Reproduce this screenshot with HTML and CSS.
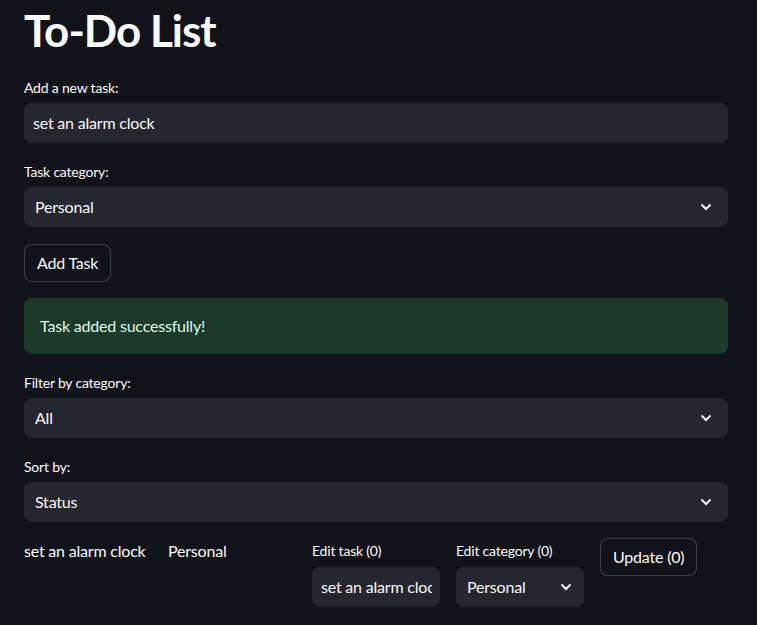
FILE: index.html
```html
<!DOCTYPE html>
<html lang="en">
<head>
<meta charset="utf-8">
<title>To-Do List</title>
<link rel="stylesheet" href="styles.css">
</head>
<body>
<main class="app">
  <h1 class="title">To-Do List</h1>

  <div class="widget">
    <label class="label">Add a new task:</label>
    <div class="field"><span class="value">set an alarm clock</span></div>
  </div>

  <div class="widget">
    <label class="label">Task category:</label>
    <div class="field select"><span class="value">Personal</span>
      <svg class="chev" width="12" height="8" viewBox="0 0 12 8"><path d="M1.5 1.5 L6 6 L10.5 1.5" fill="none" stroke="#fafafa" stroke-width="2"/></svg>
    </div>
  </div>

  <div class="btn-row"><button class="btn">Add Task</button></div>

  <div class="alert">Task added successfully!</div>

  <div class="widget">
    <label class="label">Filter by category:</label>
    <div class="field select"><span class="value">All</span>
      <svg class="chev" width="12" height="8" viewBox="0 0 12 8"><path d="M1.5 1.5 L6 6 L10.5 1.5" fill="none" stroke="#fafafa" stroke-width="2"/></svg>
    </div>
  </div>

  <div class="widget">
    <label class="label">Sort by:</label>
    <div class="field select"><span class="value">Status</span>
      <svg class="chev" width="12" height="8" viewBox="0 0 12 8"><path d="M1.5 1.5 L6 6 L10.5 1.5" fill="none" stroke="#fafafa" stroke-width="2"/></svg>
    </div>
  </div>

  <div class="task-row">
    <div class="cell text">set an alarm clock</div>
    <div class="cell text">Personal</div>
    <div class="cell widget">
      <label class="label">Edit task (0)</label>
      <div class="field small"><span class="value clip">set an alarm clock</span></div>
    </div>
    <div class="cell widget">
      <label class="label">Edit category (0)</label>
      <div class="field select small"><span class="value">Personal</span>
        <svg class="chev" width="12" height="8" viewBox="0 0 12 8"><path d="M1.5 1.5 L6 6 L10.5 1.5" fill="none" stroke="#fafafa" stroke-width="2"/></svg>
      </div>
    </div>
    <div class="cell"><button class="btn">Update (0)</button></div>
  </div>
</main>
</body>
</html>
```

FILE: styles.css
```css
* { box-sizing: border-box; }
html, body {
  margin: 0;
  background: #121318;
  color: #fafafa;
  font-family: "Lato", "Liberation Sans", sans-serif;
  letter-spacing: -0.2px;
}
.app {
  width: 704px;
  margin-left: 24px;
  display: flex;
  flex-direction: column;
  gap: 16px;
}
.title {
  margin: 0;
  height: 59px;
  padding-top: 4px;
  font-size: 44px;
  line-height: 52px;
  font-weight: 700;
  letter-spacing: -1px;
}
.widget { display: flex; flex-direction: column; }
.label {
  height: 28px;
  padding-bottom: 3px;
  display: flex;
  align-items: center;
  font-size: 14px;
}
.field {
  height: 40px;
  background: #25262e;
  border-radius: 8px;
  display: flex;
  align-items: center;
  padding: 0 16px 2px 9px;
  font-size: 16px;
  overflow: hidden;
}
.field.select { padding-left: 11px; justify-content: space-between; }
.value { white-space: nowrap; }
.chev { flex: none; margin-top: 2px; }
.btn-row { display: flex; padding-top: 1px; }
.btn {
  height: 38px;
  padding: 0 12px 1px;
  background: #121318;
  color: #fafafa;
  border: 1px solid rgba(250,250,250,0.2);
  border-radius: 8px;
  font-family: inherit;
  letter-spacing: inherit;
  font-size: 16px;
}
.alert {
  height: 56px;
  background: #1c3a2a;
  color: #dff9e7;
  border-radius: 8px;
  display: flex;
  align-items: center;
  padding: 0 16px 1px;
  font-size: 16px;
}
.task-row {
  display: grid;
  grid-template-columns: repeat(5, 128px);
  gap: 16px;
  align-items: start;
}
.cell.text { line-height: 26px; font-size: 16px; }
.field.small { height: 40px; margin-top: 1px; padding-right: 8px; }
.field.small.select { padding-right: 12px; }
.clip { overflow: hidden; }
```
